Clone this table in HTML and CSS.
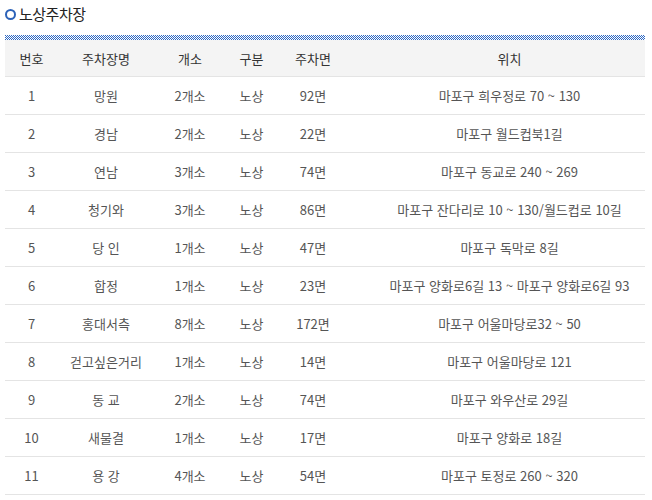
FILE: index.html
```html
<!DOCTYPE html>
<html lang="ko">
<head>
<meta charset="utf-8">
<title>노상주차장</title>
<link rel="stylesheet" href="styles.css">
</head>
<body>
<div class="wrap">
  <h3 class="title"><span class="ring"></span>노상주차장</h3>
  <svg class="bar" width="640" height="5" aria-hidden="true">
    <defs>
      <pattern id="chk" width="2" height="2" patternUnits="userSpaceOnUse">
        <rect x="0" y="0" width="2" height="2" fill="#ffffff"/>
        <rect x="0" y="0" width="1" height="1" fill="#2d68c4"/>
        <rect x="1" y="1" width="1" height="1" fill="#2d68c4"/>
      </pattern>
    </defs>
    <rect x="0" y="0" width="640" height="5" fill="url(#chk)"/>
  </svg>
  <table class="tbl">
    <colgroup>
      <col class="c1"><col class="c2"><col class="c3"><col class="c4"><col class="c5"><col class="c6">
    </colgroup>
    <thead>
      <tr><th>번호</th><th>주차장명</th><th>개소</th><th>구분</th><th>주차면</th><th class="loc">위치</th></tr>
    </thead>
    <tbody>
      <tr><td>1</td><td>망원</td><td>2개소</td><td>노상</td><td>92면</td><td class="loc">마포구 희우정로 70 ~ 130</td></tr>
      <tr><td>2</td><td>경남</td><td>2개소</td><td>노상</td><td>22면</td><td class="loc">마포구 월드컵북1길</td></tr>
      <tr><td>3</td><td>연남</td><td>3개소</td><td>노상</td><td>74면</td><td class="loc">마포구 동교로 240 ~ 269</td></tr>
      <tr><td>4</td><td>청기와</td><td>3개소</td><td>노상</td><td>86면</td><td class="loc">마포구 잔다리로 10 ~ 130/월드컵로 10길</td></tr>
      <tr><td>5</td><td>당 인</td><td>1개소</td><td>노상</td><td>47면</td><td class="loc">마포구 독막로 8길</td></tr>
      <tr><td>6</td><td>합정</td><td>1개소</td><td>노상</td><td>23면</td><td class="loc">마포구 양화로6길 13 ~ 마포구 양화로6길 93</td></tr>
      <tr><td>7</td><td>홍대서측</td><td>8개소</td><td>노상</td><td>172면</td><td class="loc">마포구 어울마당로32 ~ 50</td></tr>
      <tr><td>8</td><td>걷고싶은거리</td><td>1개소</td><td>노상</td><td>14면</td><td class="loc">마포구 어울마당로 121</td></tr>
      <tr><td>9</td><td>동 교</td><td>2개소</td><td>노상</td><td>74면</td><td class="loc">마포구 와우산로 29길</td></tr>
      <tr><td>10</td><td>새물결</td><td>1개소</td><td>노상</td><td>17면</td><td class="loc">마포구 양화로 18길</td></tr>
      <tr><td>11</td><td>용 강</td><td>4개소</td><td>노상</td><td>54면</td><td class="loc">마포구 토정로 260 ~ 320</td></tr>
    </tbody>
  </table>
</div>
</body>
</html>
```
FILE: styles.css
```css
html, body {
  margin: 0;
  padding: 0;
  background: #fff;
}
body {
  font-family: "Noto Sans CJK KR", "Noto Sans", sans-serif;
  color: #555;
}
.wrap {
  padding: 4px 7px 0 5px;
}
.title {
  margin: 0;
  display: flex;
  align-items: center;
  gap: 3px;
  font-size: 15px;
  font-weight: 400;
  line-height: 20px;
  color: #222;
  letter-spacing: -0.5px;
}
.ring {
  width: 7px;
  height: 7px;
  border: 2.5px solid #2c62b8;
  border-radius: 50%;
  margin-top: 1px;
}
.bar {
  display: block;
  margin-top: 11px;
}
.tbl {
  width: 640px;
  border-collapse: collapse;
  table-layout: fixed;
  font-size: 13px;
}
.c1 { width: 53px; }
.c2 { width: 96px; }
.c3 { width: 72px; }
.c4 { width: 51px; }
.c5 { width: 72px; }
.c6 { width: 296px; }
.tbl th {
  height: 36px;
  padding: 0;
  background: #f4f4f4;
  color: #333;
  font-weight: 400;
  border-bottom: 1px solid #e4e4e4;
  text-align: center;
}
.tbl td {
  height: 37px;
  padding: 0;
  border-bottom: 1px solid #e4e4e4;
  text-align: center;
  white-space: nowrap;
}
.tbl .loc {
  padding-left: 25px;
}
```
